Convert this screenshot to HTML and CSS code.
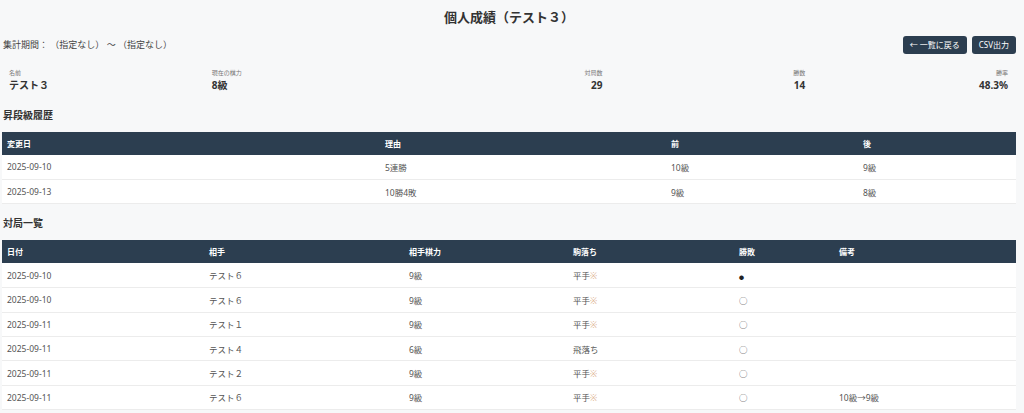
FILE: index.html
```html
<!DOCTYPE html>
<html lang="ja">
<head>
<meta charset="utf-8">
<title>個人成績（テスト３）</title>
<link rel="stylesheet" href="styles.css">
</head>
<body>
<div class="page">
  <h1 class="title">個人成績（テスト３）</h1>
  <div class="toolbar">
    <div class="period">集計期間： （指定なし） 〜 （指定なし）</div>
    <div class="actions">
      <button class="btn">← 一覧に戻る</button>
      <button class="btn">CSV出力</button>
    </div>
  </div>
  <div class="stats">
    <div class="stat"><div class="stat-label">名前</div><div class="stat-value">テスト３</div></div>
    <div class="stat"><div class="stat-label">現在の棋力</div><div class="stat-value">8級</div></div>
    <div class="stat right"><div class="stat-label">対局数</div><div class="stat-value">29</div></div>
    <div class="stat right"><div class="stat-label">勝数</div><div class="stat-value">14</div></div>
    <div class="stat right"><div class="stat-label">勝率</div><div class="stat-value">48.3%</div></div>
  </div>

  <h2 class="section-title">昇段級履歴</h2>
  <table class="tbl history">
    <thead>
      <tr><th>変更日</th><th>理由</th><th>前</th><th>後</th></tr>
    </thead>
    <tbody>
      <tr><td>2025-09-10</td><td>5連勝</td><td>10級</td><td>9級</td></tr>
      <tr><td>2025-09-13</td><td>10勝4敗</td><td>9級</td><td>8級</td></tr>
    </tbody>
  </table>

  <h2 class="section-title">対局一覧</h2>
  <table class="tbl games">
    <thead>
      <tr><th>日付</th><th>相手</th><th>相手棋力</th><th>駒落ち</th><th>勝敗</th><th>備考</th></tr>
    </thead>
    <tbody>
      <tr><td>2025-09-10</td><td>テスト６</td><td>9級</td><td>平手<span class="mark">※</span></td><td><span class="lose">●</span></td><td></td></tr>
      <tr><td>2025-09-10</td><td>テスト６</td><td>9級</td><td>平手<span class="mark">※</span></td><td>○</td><td></td></tr>
      <tr><td>2025-09-11</td><td>テスト１</td><td>9級</td><td>平手<span class="mark">※</span></td><td>○</td><td></td></tr>
      <tr><td>2025-09-11</td><td>テスト４</td><td>6級</td><td>飛落ち</td><td>○</td><td></td></tr>
      <tr><td>2025-09-11</td><td>テスト２</td><td>9級</td><td>平手<span class="mark">※</span></td><td>○</td><td></td></tr>
      <tr><td>2025-09-11</td><td>テスト６</td><td>9級</td><td>平手<span class="mark">※</span></td><td>○</td><td>10級→9級</td></tr>
    </tbody>
  </table>
</div>
</body>
</html>
```

FILE: styles.css
```css
* { box-sizing: border-box; }
html, body {
  margin: 0;
  padding: 0;
  background: #f7f8f9;
}
body {
  font-family: "Noto Sans", "Noto Sans CJK JP", sans-serif;
  color: #333;
  font-size: 9px;
}
.page {
  padding: 0 8px 0 2px;
}
.title {
  margin: 0;
  height: 34px;
  line-height: 34px;
  text-align: center;
  font-size: 13px;
  font-weight: 700;
  color: #333;
}
.toolbar {
  display: flex;
  align-items: center;
  justify-content: space-between;
  height: 21px;
  padding-left: 1px;
}
.period {
  font-size: 9px;
  color: #444;
}
.actions {
  display: flex;
  gap: 5px;
}
.btn {
  font-family: inherit;
  font-size: 8px;
  color: #fff;
  background: #2c3e50;
  border: none;
  border-radius: 3px;
  height: 18px;
  padding: 0 7px;
  line-height: 18px;
}
.stats {
  display: grid;
  grid-template-columns: repeat(5, 1fr);
  padding: 8px 0 4px;
  margin-top: 6px;
}
.stat {
  padding: 0 8px 0 7px;
}
.stat.right { text-align: right; }
.stat-label {
  font-size: 6px;
  line-height: 9px;
  color: #777;
}
.stat-value {
  font-size: 10px;
  line-height: 14px;
  font-weight: 700;
  color: #333;
}
.section-title {
  margin: 12px 0 10px;
  padding-left: 1px;
  font-size: 10px;
  line-height: 14px;
  font-weight: 700;
  color: #333;
}
.tbl {
  width: 100%;
  border-collapse: collapse;
  background: #fff;
  table-layout: fixed;
}
.tbl th {
  background: #2c3e50;
  color: #fff;
  font-weight: 700;
  font-size: 8px;
  text-align: left;
  height: 23px;
  padding: 0 5px;
}
.tbl td {
  height: 24.4px;
  padding: 0 5px;
  font-size: 8.5px;
  color: #555;
  border-bottom: 1px solid #ececec;
}
.history th:nth-child(1) { width: 378px; }
.history th:nth-child(2) { width: 286px; }
.history th:nth-child(3) { width: 192px; }
.games th:nth-child(1) { width: 202px; }
.games th:nth-child(2) { width: 200px; }
.games th:nth-child(3) { width: 164px; }
.games th:nth-child(4) { width: 166px; }
.games th:nth-child(5) { width: 100px; }
.mark {
  color: #dcb08a;
}
.lose {
  font-size: 5px;
  color: #222;
}
```
